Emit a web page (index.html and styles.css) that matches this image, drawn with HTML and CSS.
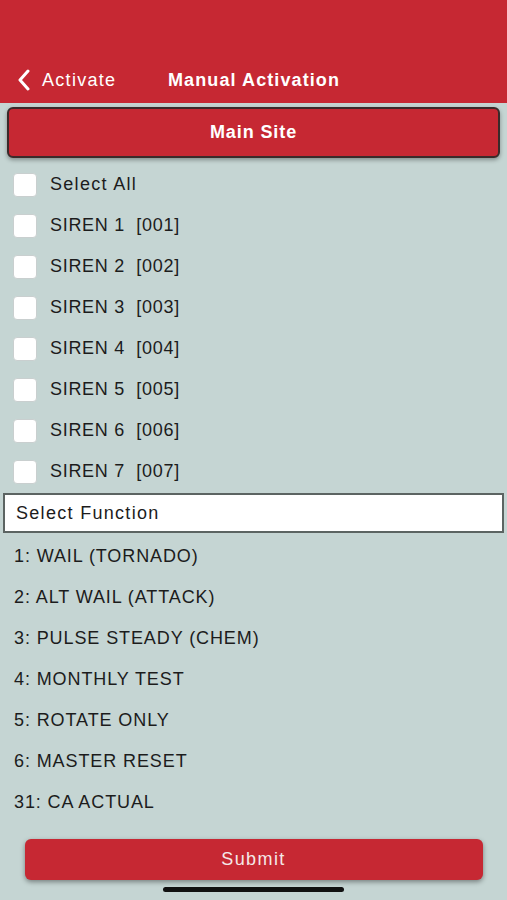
FILE: index.html
```html
<!DOCTYPE html>
<html>
<head>
<meta charset="utf-8">
<link rel="stylesheet" href="styles.css">
</head>
<body>
<div class="screen">
  <header class="nav">
    <div class="back">
      <svg class="chev" width="14" height="22" viewBox="0 0 14 22"><path d="M11 2 L3 11 L11 20" fill="none" stroke="#fff" stroke-width="3" stroke-linecap="round" stroke-linejoin="round"/></svg>
      <span class="back-label">Activate</span>
    </div>
    <div class="title">Manual Activation</div>
  </header>
  <div class="site-btn">Main Site</div>
  <ul class="checks">
    <li><span class="box"></span><span class="lc">Select All</span></li>
    <li><span class="box"></span>SIREN 1&nbsp;&nbsp;[001]</li>
    <li><span class="box"></span>SIREN 2&nbsp;&nbsp;[002]</li>
    <li><span class="box"></span>SIREN 3&nbsp;&nbsp;[003]</li>
    <li><span class="box"></span>SIREN 4&nbsp;&nbsp;[004]</li>
    <li><span class="box"></span>SIREN 5&nbsp;&nbsp;[005]</li>
    <li><span class="box"></span>SIREN 6&nbsp;&nbsp;[006]</li>
    <li><span class="box"></span>SIREN 7&nbsp;&nbsp;[007]</li>
  </ul>
  <div class="select">Select Function</div>
  <ul class="funcs">
    <li>1: WAIL (TORNADO)</li>
    <li>2: ALT WAIL (ATTACK)</li>
    <li>3: PULSE STEADY (CHEM)</li>
    <li>4: MONTHLY TEST</li>
    <li>5: ROTATE ONLY</li>
    <li>6: MASTER RESET</li>
    <li>31: CA ACTUAL</li>
  </ul>
  <div class="footer">
    <div class="submit">Submit</div>
    <div class="home"></div>
  </div>
</div>
</body>
</html>
```
FILE: styles.css
```css
* { box-sizing: border-box; margin: 0; padding: 0; }
body { margin: 0; background: #c5d5d3; font-family: "Liberation Sans", Arial, sans-serif; color: #1c1c1c; }
.screen { width: 507px; height: 900px; display: flex; flex-direction: column; background: #c5d5d3; overflow: hidden; }
.nav { height: 103px; background: #c62833; display: flex; align-items: flex-end; padding: 0 0 12px 17px; color: #fff; }
.back { display: flex; align-items: center; gap: 11px; font-size: 18px; width: 151px; }
.back-label { letter-spacing: 1.3px; }
.chev { display: block; }
.title { font-size: 18px; font-weight: 700; letter-spacing: 1.1px; }
.site-btn { margin: 4px 7px 0 7px; height: 51px; background: #c62833; border: 2px solid #3a2a2a; border-radius: 6px; color: #fff; font-weight: 700; font-size: 18px; letter-spacing: 0.9px; display: flex; align-items: center; justify-content: center; box-shadow: 0 2px 4px rgba(0,0,0,0.35); }
.checks { list-style: none; padding: 6px 0 0 13px; }
.checks li { height: 41px; display: flex; align-items: center; font-size: 18px; letter-spacing: 0.7px; white-space: pre; }
.checks .lc { letter-spacing: 1.3px; }
.box { width: 24px; height: 24px; background: #fff; border: 1px solid #c9cfcf; border-radius: 4px; margin-right: 13px; }
.select { margin: 1px 3px 0 3px; height: 40px; background: #fff; border: 2px solid #5c6462; display: flex; align-items: center; padding-left: 11px; font-size: 18px; letter-spacing: 1.3px; }
.funcs { list-style: none; padding: 3px 0 0 14px; }
.funcs li { height: 41px; display: flex; align-items: center; font-size: 18px; letter-spacing: 0.9px; }
.footer { margin-top: auto; display: flex; flex-direction: column; align-items: center; padding-bottom: 8px; }
.submit { width: 458px; height: 41px; background: #c62833; border-radius: 6px; color: #f4e8e8; font-size: 18px; letter-spacing: 1.4px; display: flex; align-items: center; justify-content: center; box-shadow: 0 2px 5px rgba(0,0,0,0.4); }
.home { width: 181px; height: 5px; background: #111; border-radius: 3px; margin-top: 7px; }
```
